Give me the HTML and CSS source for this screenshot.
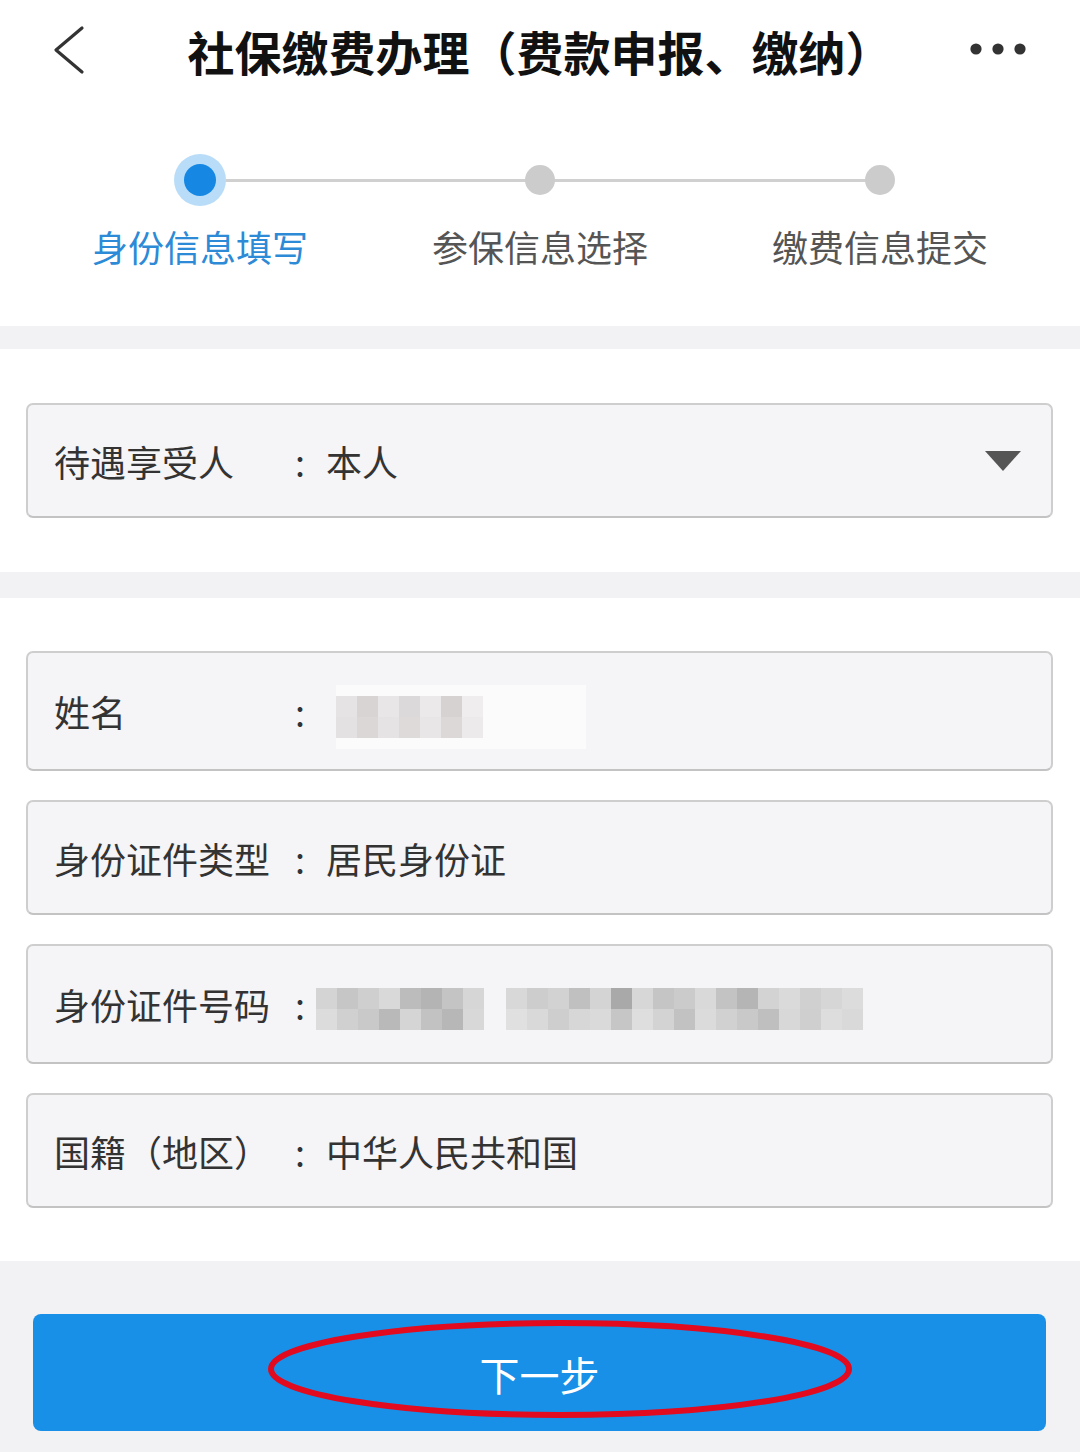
FILE: index.html
```html
<!DOCTYPE html>
<html lang="zh-CN">
<head>
<meta charset="utf-8">
<title>社保缴费办理</title>
<link rel="stylesheet" href="styles.css">
</head>
<body>
<div class="page">
  <header class="topbar">
    <svg class="back" width="40" height="50" viewBox="0 0 40 50"><path d="M32 3 L6 25 L32 47" fill="none" stroke="#333" stroke-width="3.2" stroke-linecap="round" stroke-linejoin="round"/></svg>
    <h1 class="title">社保缴费办理（费款申报、缴纳）</h1>
    <svg class="more" width="60" height="16" viewBox="0 0 60 16"><circle cx="8" cy="8" r="5.6" fill="#333"/><circle cx="30" cy="8" r="5.6" fill="#333"/><circle cx="52" cy="8" r="5.6" fill="#333"/></svg>
  </header>

  <section class="steps">
    <div class="step active">
      <div class="dot-wrap"><span class="dot"></span></div>
      <div class="step-label">身份信息填写</div>
    </div>
    <div class="step">
      <div class="dot-wrap"><span class="dot"></span></div>
      <div class="step-label">参保信息选择</div>
    </div>
    <div class="step">
      <div class="dot-wrap"><span class="dot"></span></div>
      <div class="step-label">缴费信息提交</div>
    </div>
  </section>

  <div class="band band-a"></div>

  <section class="block block-a">
    <div class="field">
      <span class="label">待遇享受人</span><span class="colon">:</span><span class="value">本人</span>
      <svg class="caret" width="36" height="20" viewBox="0 0 36 20"><path d="M0 0 H36 L18 20 Z" fill="#555"/></svg>
    </div>
  </section>

  <div class="band band-b"></div>

  <section class="block block-b">
    <div class="field tall">
      <span class="label">姓名</span><span class="colon">:</span>
      <svg class="mosaic mosaic-name" width="250" height="64" viewBox="0 0 250 64">
        <rect x="0" y="0" width="250" height="64" fill="#fbfbfc"/>
        <g transform="translate(0,11)">
          <rect x="0" y="0" width="21" height="21" fill="#e6e3e4"/>
          <rect x="21" y="0" width="21" height="21" fill="#d8d4d4"/>
          <rect x="42" y="0" width="21" height="21" fill="#e8e6e7"/>
          <rect x="63" y="0" width="21" height="21" fill="#dcd9da"/>
          <rect x="84" y="0" width="21" height="21" fill="#ebe9ea"/>
          <rect x="105" y="0" width="21" height="21" fill="#d6d2d2"/>
          <rect x="126" y="0" width="21" height="21" fill="#efedee"/>
          <rect x="0" y="21" width="21" height="21" fill="#e4e1e2"/>
          <rect x="21" y="21" width="21" height="21" fill="#dbd7d7"/>
          <rect x="42" y="21" width="21" height="21" fill="#e6e3e4"/>
          <rect x="63" y="21" width="21" height="21" fill="#dedada"/>
          <rect x="84" y="21" width="21" height="21" fill="#e9e6e7"/>
          <rect x="105" y="21" width="21" height="21" fill="#dcd8d8"/>
          <rect x="126" y="21" width="21" height="21" fill="#eceaeb"/>
        </g>
      </svg>
    </div>
    <div class="field">
      <span class="label">身份证件类型</span><span class="colon">:</span><span class="value">居民身份证</span>
    </div>
    <div class="field tall">
      <span class="label">身份证件号码</span><span class="colon">:</span>
      <svg class="mosaic mosaic-id" width="547" height="42" viewBox="0 0 547 42">
        <rect x="0" y="0" width="21" height="21" fill="#d4d4d4"/>
        <rect x="21" y="0" width="21" height="21" fill="#c6c6c6"/>
        <rect x="42" y="0" width="21" height="21" fill="#cfcfcf"/>
        <rect x="63" y="0" width="21" height="21" fill="#d9d9d9"/>
        <rect x="84" y="0" width="21" height="21" fill="#bcbcbc"/>
        <rect x="105" y="0" width="21" height="21" fill="#b4b4b4"/>
        <rect x="126" y="0" width="21" height="21" fill="#c4c4c4"/>
        <rect x="147" y="0" width="21" height="21" fill="#d6d6d6"/>
        <rect x="0" y="21" width="21" height="21" fill="#dcdcdc"/>
        <rect x="21" y="21" width="21" height="21" fill="#d0d0d0"/>
        <rect x="42" y="21" width="21" height="21" fill="#c9c9c9"/>
        <rect x="63" y="21" width="21" height="21" fill="#b9b9b9"/>
        <rect x="84" y="21" width="21" height="21" fill="#d5d5d5"/>
        <rect x="105" y="21" width="21" height="21" fill="#c2c2c2"/>
        <rect x="126" y="21" width="21" height="21" fill="#b7b7b7"/>
        <rect x="147" y="21" width="21" height="21" fill="#d8d8d8"/>
        <g transform="translate(190,0)">
          <rect x="0" y="0" width="21" height="21" fill="#d8d8d8"/>
          <rect x="21" y="0" width="21" height="21" fill="#cdcdcd"/>
          <rect x="42" y="0" width="21" height="21" fill="#d2d2d2"/>
          <rect x="63" y="0" width="21" height="21" fill="#c0c0c0"/>
          <rect x="84" y="0" width="21" height="21" fill="#d4d4d4"/>
          <rect x="105" y="0" width="21" height="21" fill="#a9a9a9"/>
          <rect x="126" y="0" width="21" height="21" fill="#d7d7d7"/>
          <rect x="147" y="0" width="21" height="21" fill="#c5c5c5"/>
          <rect x="168" y="0" width="21" height="21" fill="#cbcbcb"/>
          <rect x="189" y="0" width="21" height="21" fill="#d9d9d9"/>
          <rect x="210" y="0" width="21" height="21" fill="#c3c3c3"/>
          <rect x="231" y="0" width="21" height="21" fill="#b5b5b5"/>
          <rect x="252" y="0" width="21" height="21" fill="#d3d3d3"/>
          <rect x="273" y="0" width="21" height="21" fill="#dadada"/>
          <rect x="294" y="0" width="21" height="21" fill="#d0d0d0"/>
          <rect x="315" y="0" width="21" height="21" fill="#d6d6d6"/>
          <rect x="336" y="0" width="21" height="21" fill="#dcdcdc"/>
          <rect x="0" y="21" width="21" height="21" fill="#e0e0e0"/>
          <rect x="21" y="21" width="21" height="21" fill="#d9d9d9"/>
          <rect x="42" y="21" width="21" height="21" fill="#cecece"/>
          <rect x="63" y="21" width="21" height="21" fill="#d7d7d7"/>
          <rect x="84" y="21" width="21" height="21" fill="#dadada"/>
          <rect x="105" y="21" width="21" height="21" fill="#c6c6c6"/>
          <rect x="126" y="21" width="21" height="21" fill="#dedede"/>
          <rect x="147" y="21" width="21" height="21" fill="#d3d3d3"/>
          <rect x="168" y="21" width="21" height="21" fill="#c2c2c2"/>
          <rect x="189" y="21" width="21" height="21" fill="#dbdbdb"/>
          <rect x="210" y="21" width="21" height="21" fill="#d1d1d1"/>
          <rect x="231" y="21" width="21" height="21" fill="#c9c9c9"/>
          <rect x="252" y="21" width="21" height="21" fill="#bfbfbf"/>
          <rect x="273" y="21" width="21" height="21" fill="#d8d8d8"/>
          <rect x="294" y="21" width="21" height="21" fill="#cfcfcf"/>
          <rect x="315" y="21" width="21" height="21" fill="#dddddd"/>
          <rect x="336" y="21" width="21" height="21" fill="#d9d9d9"/>
        </g>
      </svg>
    </div>
    <div class="field">
      <span class="label">国籍（地区）</span><span class="colon">:</span><span class="value">中华人民共和国</span>
    </div>
  </section>

  <footer class="footer">
    <button class="next" type="button">
      <span class="next-text">下一步</span>
      <svg class="circle-mark" width="600" height="110" viewBox="0 0 600 110"><ellipse cx="294" cy="55" rx="289" ry="46" fill="none" stroke="#e10a1e" stroke-width="6"/></svg>
    </button>
  </footer>
</div>
</body>
</html>
```

FILE: styles.css
```css
* { box-sizing: border-box; }
html, body { margin: 0; padding: 0; }
body {
  width: 1080px;
  height: 1452px;
  overflow: hidden;
  background: #f2f1f3;
  font-family: "Noto Sans CJK SC", "Noto Sans", sans-serif;
  color: #333;
}
.page { display: flex; flex-direction: column; height: 1452px; }

.topbar {
  height: 100px;
  background: #fff;
  display: flex;
  align-items: center;
  justify-content: space-between;
  padding: 0 52px 0 50px;
  position: relative;
}
.back { display: block; }
.title {
  margin: 0;
  font-size: 47px;
  font-weight: 700;
  color: #111;
  line-height: 1;
  position: absolute;
  left: 0; right: 0;
  text-align: center;
  pointer-events: none;
}
.more { display: block; margin-top: -2px; }

.steps {
  background: #fff;
  height: 226px;
  display: flex;
  padding: 54px 30px 0;
}
.step {
  flex: 1;
  display: flex;
  flex-direction: column;
  align-items: center;
  position: relative;
}
.step + .step::before {
  content: "";
  position: absolute;
  top: 25px;
  left: -50%;
  width: 100%;
  height: 3px;
  background: #d0d0d0;
}
.dot-wrap {
  width: 52px;
  height: 52px;
  display: flex;
  align-items: center;
  justify-content: center;
  position: relative;
  z-index: 1;
}
.dot {
  width: 30px; height: 30px;
  border-radius: 50%;
  background: #cccccc;
}
.step.active .dot-wrap { background: #b9ddf8; border-radius: 50%; }
.step.active .dot { width: 32px; height: 32px; background: #1688e4; }
.step-label {
  margin-top: 22px;
  font-size: 36px;
  line-height: 1;
  color: #555;
}
.step.active .step-label { color: #2c8ad6; }

.band { background: #f2f1f3; }
.band-a { height: 23px; }
.band-b { height: 26px; }

.block {
  background: #fff;
  padding: 54px 27px 54px 26px;
  display: flex;
  flex-direction: column;
  gap: 29px;
}
.block-b { padding-top: 53px; padding-bottom: 53px; }

.field {
  height: 115px;
  background: #f5f4f6;
  border: 2px solid #cfcecf;
  border-bottom-color: #c4c3c4;
  border-radius: 7px;
  display: flex;
  align-items: center;
  padding-left: 26px;
  padding-right: 30px;
  font-size: 36px;
  line-height: 1;
  color: #333;
}
.field.tall { height: 120px; }
.label { width: 228px; white-space: nowrap; }
.colon { width: 36px; text-align: center; }
.value { margin-left: 8px; }
.caret { margin-left: auto; display: block; }
.mosaic { display: block; }
.mosaic-name { margin-left: 18px; margin-top: 12px; }
.mosaic-id { margin-left: -2px; margin-top: 10px; }

.footer {
  flex: 1;
  background: #f2f1f3;
  padding: 53px 34px 0 33px;
}
.next {
  width: 100%;
  height: 117px;
  border: none;
  border-radius: 8px;
  background: #1890e8;
  color: #fff;
  font-family: "Noto Sans CJK SC", "Noto Sans", sans-serif;
  font-size: 40px;
  display: flex;
  align-items: center;
  justify-content: center;
  position: relative;
  padding: 0;
}
.next-text { line-height: 1; margin-top: 2px; }
.circle-mark {
  position: absolute;
  left: 233px;
  top: 0;
  pointer-events: none;
}
```
